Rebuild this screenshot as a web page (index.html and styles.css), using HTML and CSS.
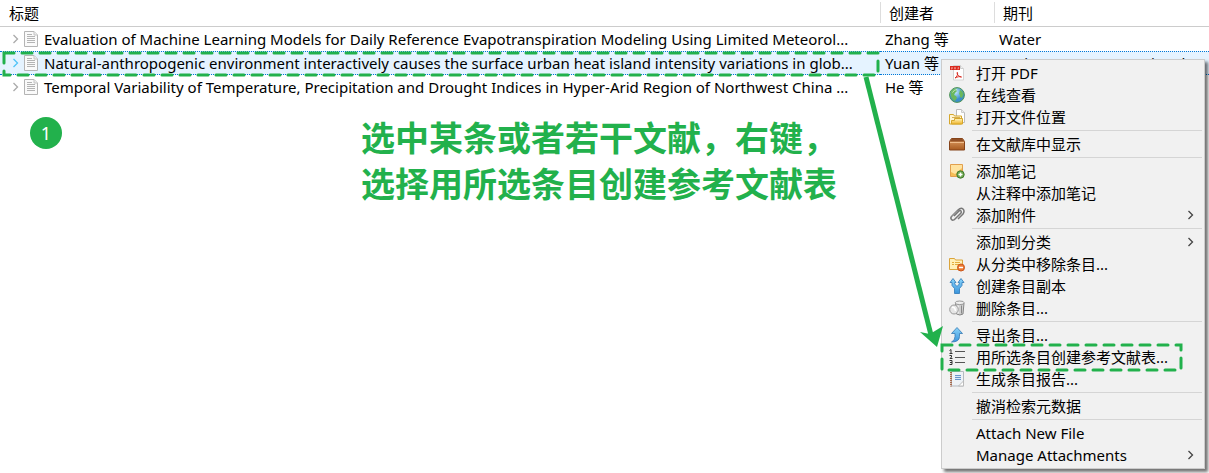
FILE: index.html
```html
<!DOCTYPE html>
<html lang="zh-CN">
<head>
<meta charset="utf-8">
<title>文献库</title>
<link rel="stylesheet" href="styles.css">
</head>
<body>
<svg class="defs" aria-hidden="true">
  <defs>
    <symbol id="page" viewBox="0 0 14 16">
      <path d="M.5.500h9.500l3.500 3.500v11.500H.5z" fill="#fafafa" stroke="#b4b4b4"/>
      <path d="M10 .5v3.500h3.500" fill="#eee" stroke="#c4c4c4"/>
      <path d="M3 3.500h5M3 5.500h8M3 7.500h8M3 9.500h8M3 11.500h8" stroke="#b4b4b4"/>
    </symbol>
    <symbol id="chevron" viewBox="0 0 8 10"><path d="M1.500 1l4 4-4 4" fill="none" stroke="currentColor" stroke-width="1.300"/></symbol>
    <linearGradient id="gold" x2="0" y2="1"><stop stop-color="#fff4bd"/><stop offset="1" stop-color="#f0b62c"/></linearGradient>
    <linearGradient id="wood" x2="0" y2="1"><stop stop-color="#e0a066"/><stop offset="1" stop-color="#a85a20"/></linearGradient>
    <linearGradient id="blue" x2="0" y2="1"><stop stop-color="#8ad4fa"/><stop offset="1" stop-color="#3a94dc"/></linearGradient>
    <radialGradient id="sea" cx=".4" cy=".3"><stop stop-color="#c4eafc"/><stop offset="1" stop-color="#3a8ecb"/></radialGradient>
  </defs>
</svg>
<main class="library">
  <table class="items">
    <colgroup><col><col class="col-creator"><col class="col-journal"></colgroup>
    <thead><tr><th scope="col">标题</th><th scope="col">创建者</th><th scope="col">期刊</th></tr></thead>
    <tbody>
      <tr>
        <td class="title"><div class="entry"><svg class="twisty"><use href="#chevron"/></svg><svg class="doc"><use href="#page"/></svg><span>Evaluation of Machine Learning Models for Daily Reference Evapotranspiration Modeling Using Limited Meteorol...</span></div></td>
        <td>Zhang 等</td><td>Water</td>
      </tr>
      <tr class="selected">
        <td class="title"><div class="entry marked"><svg class="twisty"><use href="#chevron"/></svg><svg class="doc"><use href="#page"/></svg><span>Natural-anthropogenic environment interactively causes the surface urban heat island intensity variations in glob...</span>
          <svg class="outline" aria-hidden="true"><rect x="2" y="2"/></svg></div></td>
        <td>Yuan 等</td><td>Environment International</td>
      </tr>
      <tr>
        <td class="title"><div class="entry"><svg class="twisty"><use href="#chevron"/></svg><svg class="doc"><use href="#page"/></svg><span>Temporal Variability of Temperature, Precipitation and Drought Indices in Hyper-Arid Region of Northwest China ...</span></div></td>
        <td>He 等</td><td></td>
      </tr>
    </tbody>
  </table>
  <section class="note">
    <span class="step">1</span>
    <p class="tip">选中某条或者若干文献，右键，<br>选择用所选条目创建参考文献表</p>
  </section>

  <div class="menu" role="menu">
    <button class="item" role="menuitem"><svg class="icon" viewBox="0 0 16 16"><path d="M4.500.5h7l3 3v11.500h-10z" fill="#fff" stroke="#d4d4d4"/><path d="M11.500.5v3h3" fill="#eee" stroke="#ccc"/><path d="M1 1h10v4H1z" fill="#d92b20"/><path d="M2.500 4.500V2.500h1v1h-1M5.500 2.500v1.500h1v-1.500zM9 4.500V2.500h1M9 3.500h1" fill="none" stroke="#ffc2bb" stroke-width=".5"/><path d="M6 13c2-1 3-4 2.500-5.500-1-1-.5 4 4 4.500-2-.7-4-.3-6.500 1z" fill="none" stroke="#d92b20"/></svg>打开 PDF</button>
    <button class="item" role="menuitem"><svg class="icon" viewBox="0 0 16 16"><circle cx="8" cy="8" r="7.400" fill="url(#sea)" stroke="#4f9453"/><path d="M2 5c1-3 4-4 6-3.500L7 3l1 1-2 2-1 2 2 1 1 2-2 3C3 13 1 9 2 5zM11 3l2 1 1.500 3-1.500 4-2-1V8L10 7z" fill="#6ab85c"/><path d="M3.500 5.500Q5 2.500 8 2.500" fill="none" stroke="#d5f2ca" opacity=".8"/></svg>在线查看</button>
    <button class="item" role="menuitem"><svg class="icon" viewBox="0 0 16 16"><path d="M7.500.5h5l3 3v10h-8z" fill="#fff" stroke="#bbb"/><path d="M12.500.5v3h3" fill="#eee" stroke="#ccc"/><path d="M.5 5.500h4l1 1.500h7v8H.5z" fill="#fff6d6" stroke="#d6a72c"/><path d="M3 8.500h8" stroke="#d6b052"/><path d="M5.500 9.500h8v5.500H2.500v-3.500h3z" fill="url(#gold)" stroke="#d6a72c"/></svg>打开文件位置</button>
    <hr>
    <button class="item" role="menuitem"><svg class="icon" viewBox="0 0 16 16"><path d="M2.500 2.500h11l2 3v8.500H.5V5.500z" fill="url(#wood)" stroke="#86441a"/><path d="M2.500 3h11l1.500 2.500H1z" fill="#925026"/><path d="M1 6.500h14" stroke="#f0bd8b"/></svg>在文献库中显示</button>
    <hr>
    <button class="item" role="menuitem"><svg class="icon" viewBox="0 0 16 16"><path d="M1.500 1.500h12v12h-12z" fill="#ffe3a0" stroke="#e2a04e"/><path d="M2 9l4 2 7-6v8H2z" fill="#f7bd55"/><circle cx="11.500" cy="11.500" r="3.700" fill="#6aa54c" stroke="#427a2e"/><path d="M9.500 11.500h4M11.500 9.500v4" stroke="#fff" stroke-width="1.500"/></svg>添加笔记</button>
    <button class="item" role="menuitem"><span class="icon"></span>从注释中添加笔记</button>
    <button class="item" role="menuitem" aria-haspopup="menu"><svg class="icon" viewBox="0 0 16 16"><path d="M5 9l5-5q1.500-1 2 0t0 2l-6 6q-2 2-3.500.5T3 9l6-6q3-3 5-1t0 5l-5 5" fill="none" stroke="#777" stroke-width="1.500"/><path d="M3 9.500l6-6" stroke="#ccc" stroke-width=".6"/></svg>添加附件<svg class="more"><use href="#chevron"/></svg></button>
    <hr>
    <button class="item" role="menuitem" aria-haspopup="menu"><span class="icon"></span>添加到分类<svg class="more"><use href="#chevron"/></svg></button>
    <button class="item" role="menuitem"><svg class="icon" viewBox="0 0 16 16"><path d="M.5 2.500h5l1 1.500h7v9.500H.5z" fill="#fff0b8" stroke="#dba43b"/><path d="M3 6.500h2M6 6.500h5M3 8.500h2M6 8.500h5" stroke="#e3ad3b"/><circle cx="12" cy="11.500" r="3.500" fill="#ee7a30" stroke="#c9551a"/><path d="M10 11.500h4" stroke="#fff" stroke-width="1.500"/></svg>从分类中移除条目...</button>
    <button class="item" role="menuitem"><svg class="icon" viewBox="0 0 16 16"><path d="M5.500 15.500V10.500L3 7.500V4.500H1L4 .5l3 4H5.700V6L8 8.500 10.300 6V4.500H9l3-4 3 4h-2v3l-2.500 3v5z" fill="url(#blue)" stroke="#2f78b8" stroke-width=".8"/></svg>创建条目副本</button>
    <button class="item" role="menuitem"><svg class="icon" viewBox="0 0 16 16"><path d="M6.500 3l1 11q3.500 2 6.500 0l1-11z" fill="#d0d0d0" stroke="#858585"/><path d="M9 5.500v8" stroke="#f4f4f4" stroke-width="1.500"/><ellipse cx="10.700" cy="2.800" rx="4.500" ry="1.800" fill="#eee" stroke="#999"/><path d="M12.500 5.500v8" stroke="#888"/><ellipse cx="5" cy="9.500" rx="4.300" ry="4.500" fill="#e6e6e6" stroke="#999"/><path d="M3 7.500q3-1 3.500 3.500" fill="none" stroke="#fff" stroke-width="1.500"/></svg>删除条目...</button>
    <hr>
    <button class="item" role="menuitem"><svg class="icon" viewBox="0 0 16 16"><path d="M2.500 15q3.500-1.500 3.500-5.500v-3H2.500L8 .5l5.500 6H10.500v3q0 5.500-8 5.500z" fill="url(#blue)" stroke="#3679b3" stroke-width=".8"/></svg>导出条目...</button>
    <button class="item marked" role="menuitem"><svg class="icon" viewBox="0 0 16 16"><path d="M6 2.500h10M6 8.500h10M6 13.500h10" stroke="#555"/><path d="M.5 1.500L2 .5v4M.5 4.500h3M.5 6.500h2V8L1 9.500h2.500M.5 11.500h2.500v4H.5M1 13.500H3" fill="none" stroke="#333"/></svg>用所选条目创建参考文献表...<svg class="outline" aria-hidden="true"><rect x="2" y="2"/></svg></button>
    <button class="item" role="menuitem"><svg class="icon" viewBox="0 0 16 16"><path d="M2.500.5h12v14.500h-12z" fill="#eef2f6" stroke="#b4bac0"/><path d="M2 1v14.500" stroke="#a76c50" stroke-width="2" stroke-dasharray="1.200 .8"/><path d="M6 4h6v4H6z" fill="#dbe8f7"/><path d="M6 4.500h6M6 6.500h6M6 8.500h6" stroke="#6a96ca"/><path d="M9.500 15l5-5v5z" fill="#fff" stroke="#bbb"/></svg>生成条目报告...</button>
    <hr>
    <button class="item" role="menuitem"><span class="icon"></span>撤消检索元数据</button>
    <hr>
    <button class="item" role="menuitem"><span class="icon"></span>Attach New File</button>
    <button class="item" role="menuitem" aria-haspopup="menu"><span class="icon"></span>Manage Attachments<svg class="more"><use href="#chevron"/></svg></button>
  </div>
  <svg class="arrow" viewBox="0 0 90 280" aria-hidden="true"><path d="M6 2L71 260" stroke="#22b14c" stroke-width="5"/><path d="M60 257L70 259 83 251 77 272z" fill="#22b14c"/></svg>
</main>
</body>
</html>
```
FILE: styles.css
```css
* { box-sizing: border-box; }
body {
  margin: 0;
  background: #fff;
  color: #000;
  font: 15px/22px "Noto Sans", "Noto Sans CJK SC", sans-serif;
}
.defs { position: absolute; width: 0; height: 0; }
.library { position: relative; min-height: 100vh; overflow: hidden; }

.items { width: 100%; table-layout: fixed; border-collapse: separate; border-spacing: 0; }
.col-creator { width: 114px; }
.col-journal { width: 215px; }
th {
  height: 27px;
  padding: 0 9px;
  border-bottom: 1px solid #ccc;
  font-weight: 400;
  text-align: left;
  background: linear-gradient(#ddd, #ddd) left 2px / 1px 21px no-repeat;
}
th:first-child { background: none; }
td { height: 24px; padding: 0 5px; white-space: nowrap; line-height: 22px; }
td.title { padding: 0; }
.entry { display: flex; align-items: center; height: 22px; padding-left: 12px; }
.twisty { width: 8px; height: 10px; margin-right: 4px; color: #aaa; }
.doc { width: 14px; height: 16px; margin-right: 6px; flex: none; }
.selected td { background: #e5f3ff; border: 1px dotted #0078d7; border-width: 1px 0; }
.selected .twisty { color: #4fc3f7; }
.marked { position: relative; }
.outline { position: absolute; overflow: visible; pointer-events: none; }
.outline rect {
  width: calc(100% - 4px);
  height: calc(100% - 4px);
  fill: none;
  stroke: #22b14c;
  stroke-width: 3px;
  stroke-linecap: round;
  stroke-dasharray: 10px 8px;
}
.entry .outline { left: 2px; top: -1px; width: calc(100% - 2px); height: 26px; }

.note { display: flex; align-items: flex-start; gap: 299px; padding: 15px 30px; }
.step {
  flex: none;
  width: 32px;
  height: 32px;
  margin-top: 3px;
  border-radius: 50%;
  background: #22b14c;
  color: #fff;
  font-size: 18px;
  line-height: 32px;
  text-align: center;
}
.tip {
  margin: 0;
  color: #22b14c;
  font: 700 34px/46px "Noto Sans CJK SC", sans-serif;
  white-space: nowrap;
}

.menu {
  position: absolute;
  top: 59px;
  right: 4px;
  width: 264px;
  padding: 2px;
  border: 1px solid #ccc;
  background: #f1f1f1;
  box-shadow: 3px 3px 3px rgba(0, 0, 0, .55);
}
.item {
  display: flex;
  align-items: center;
  width: 100%;
  height: 22px;
  padding: 0 7px 0 5px;
  border: 0;
  background: none;
  color: inherit;
  font: inherit;
  text-align: left;
  white-space: nowrap;
}
.icon { flex: none; width: 16px; height: 16px; margin-right: 11px; }
.more { width: 8px; height: 10px; margin-left: auto; color: #444; }
.menu hr { height: 1px; margin: 2px 0 2px 28px; border: 0; background: #d5d5d5; }
.item .outline { left: -4px; top: -3px; width: 243px; height: 29px; }
.arrow { position: absolute; top: 75px; right: 259px; width: 90px; height: 280px; pointer-events: none; }
```
